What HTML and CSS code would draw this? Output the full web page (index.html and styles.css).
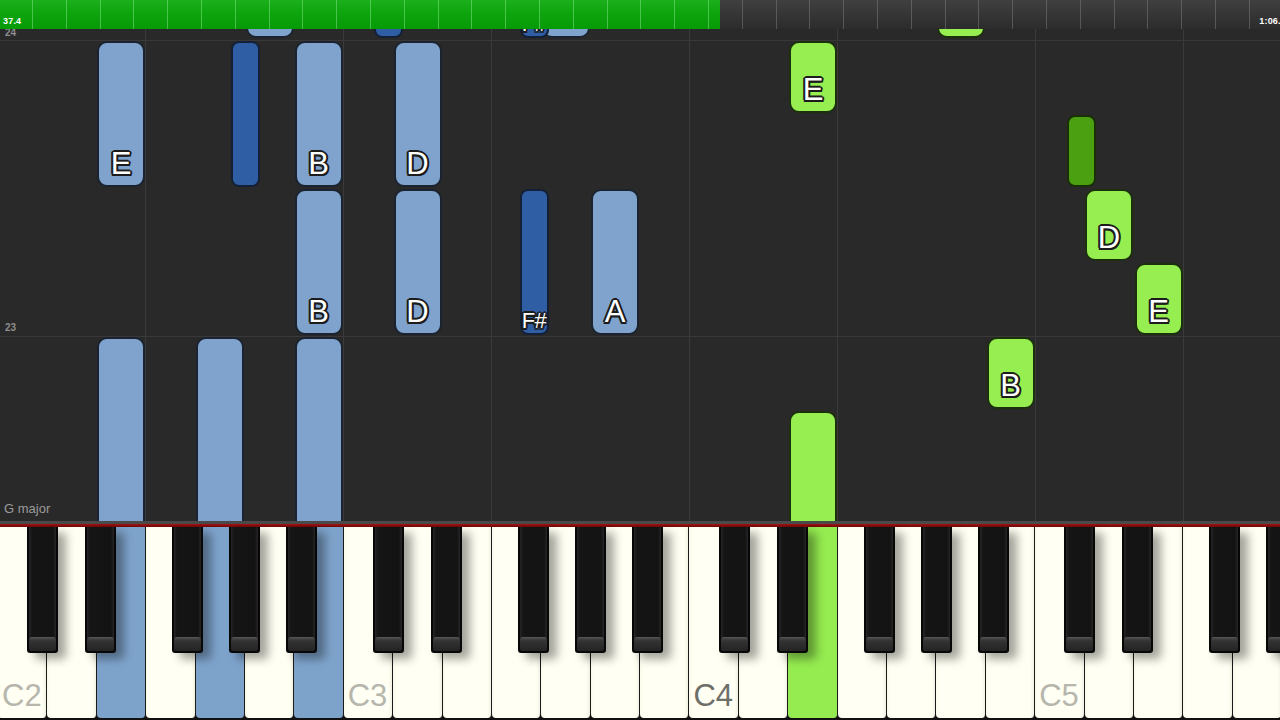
FILE: index.html
```html
<!DOCTYPE html>
<html>
<head>
<meta charset="utf-8">
<title>Piano roll</title>
<link rel="stylesheet" href="styles.css">
</head>
<body>
<div class="app">
  <div class="topbar">
    <div class="progress"><span class="time">37.4</span></div>
    <div class="remain"><span class="time end">1:06.0</span></div>
  </div>

  <div class="roll">
    <div class="vline" style="left:145px"></div>
    <div class="vline" style="left:343px"></div>
    <div class="vline" style="left:491px"></div>
    <div class="vline" style="left:689px"></div>
    <div class="vline" style="left:837px"></div>
    <div class="vline" style="left:1035px"></div>
    <div class="vline" style="left:1183px"></div>
    <div class="hline" style="top:11px"></div>
    <div class="hline" style="top:307px"></div>
    <span class="measure" style="top:-2px">24</span>
    <span class="measure" style="top:293px">23</span>
    <span class="keyname">G major</span>

    <!-- light blue notes -->
    <div class="note lb" style="left:245.5px;top:-70px;width:48px;height:79px"></div>
    <div class="note lb" style="left:97px;top:12px;width:48px;height:146px"><span>E</span></div>
    <div class="note lb" style="left:97px;top:308px;width:48px;height:220px"></div>
    <div class="note lb" style="left:196px;top:308px;width:48px;height:220px"></div>
    <div class="note lb" style="left:294.5px;top:12px;width:48px;height:146px"><span>B</span></div>
    <div class="note lb" style="left:294.5px;top:160px;width:48px;height:146px"><span>B</span></div>
    <div class="note lb" style="left:294.5px;top:308px;width:48px;height:220px"></div>
    <div class="note lb" style="left:393.5px;top:12px;width:48px;height:146px"><span>D</span></div>
    <div class="note lb" style="left:393.5px;top:160px;width:48px;height:146px"><span>D</span></div>
    <div class="note lb" style="left:541.5px;top:-70px;width:48px;height:79px"></div>
    <div class="note lb" style="left:591px;top:160px;width:48px;height:146px"><span>A</span></div>

    <!-- dark blue notes -->
    <div class="note db" style="left:230.5px;top:12px;width:29px;height:146px"></div>
    <div class="note db" style="left:374px;top:-70px;width:29px;height:79px"></div>
    <div class="note db sm" style="left:519.5px;top:-70px;width:29px;height:79px"><span>F#</span></div>
    <div class="note db sm" style="left:519.5px;top:160px;width:29px;height:146px"><span>F#</span></div>

    <!-- green notes -->
    <div class="note lg" style="left:789px;top:12px;width:48px;height:72px"><span>E</span></div>
    <div class="note lg" style="left:789px;top:382px;width:48px;height:150px"></div>
    <div class="note lg" style="left:937px;top:-70px;width:48px;height:79px"></div>
    <div class="note lg" style="left:986.5px;top:308px;width:48px;height:72px"><span>B</span></div>
    <div class="note lg" style="left:1085px;top:160px;width:48px;height:72px"><span>D</span></div>
    <div class="note lg" style="left:1134.5px;top:234px;width:48px;height:72px"><span>E</span></div>
    <div class="note dg" style="left:1066.5px;top:86px;width:29px;height:72px"></div>
  </div>

  <div class="sep-gray"></div>
  <div class="sep-red"></div>

  <div class="keyboard">
    <div class="white"><span class="lbl">C2</span></div>
    <div class="white"></div>
    <div class="white blue"></div>
    <div class="white"></div>
    <div class="white blue"></div>
    <div class="white"></div>
    <div class="white blue"></div>
    <div class="white"><span class="lbl">C3</span></div>
    <div class="white"></div>
    <div class="white"></div>
    <div class="white"></div>
    <div class="white"></div>
    <div class="white"></div>
    <div class="white"></div>
    <div class="white"><span class="lbl dark">C4</span></div>
    <div class="white"></div>
    <div class="white green"></div>
    <div class="white"></div>
    <div class="white"></div>
    <div class="white"></div>
    <div class="white"></div>
    <div class="white"><span class="lbl">C5</span></div>
    <div class="white"></div>
    <div class="white"></div>
    <div class="white"></div>
    <div class="white"></div>

    <div class="black" style="left:29px"></div>
    <div class="black" style="left:87px"></div>
    <div class="black" style="left:174px"></div>
    <div class="black" style="left:231px"></div>
    <div class="black" style="left:288px"></div>
    <div class="black" style="left:374.8px"></div>
    <div class="black" style="left:432.8px"></div>
    <div class="black" style="left:519.8px"></div>
    <div class="black" style="left:576.8px"></div>
    <div class="black" style="left:633.8px"></div>
    <div class="black" style="left:720.6px"></div>
    <div class="black" style="left:778.6px"></div>
    <div class="black" style="left:865.6px"></div>
    <div class="black" style="left:922.6px"></div>
    <div class="black" style="left:979.6px"></div>
    <div class="black" style="left:1066.4px"></div>
    <div class="black" style="left:1124.4px"></div>
    <div class="black" style="left:1211.4px"></div>
    <div class="black" style="left:1268.4px"></div>
  </div>
</div>
</body>
</html>
```
FILE: styles.css
```css
* { box-sizing: border-box; margin: 0; padding: 0; }

html, body {
  width: 1280px;
  height: 720px;
  overflow: hidden;
  background: #111;
  font-family: "Liberation Sans", Arial, sans-serif;
}

.app {
  display: flex;
  flex-direction: column;
  width: 1280px;
  height: 720px;
}

/* ---------- top progress bar ---------- */
.topbar {
  display: flex;
  height: 29px;
  flex: none;
  position: relative;
  z-index: 2;
}

.progress,
.remain {
  display: flex;
  align-items: flex-end;
  padding-bottom: 3px;
}

.progress {
  width: 720px;
  flex: none;
  padding-left: 3px;
  background:
    repeating-linear-gradient(90deg, transparent 0 32px, rgba(150, 235, 150, 0.45) 32px 33px, transparent 33px 33.8px),
    linear-gradient(180deg, #1cb01c 0%, #0da50d 45%, #079a07 100%);
}

.remain {
  flex: 1;
  justify-content: flex-end;
  overflow: hidden;
  background:
    repeating-linear-gradient(90deg, transparent 0 21.8px, rgba(120, 120, 120, 0.55) 21.8px 22.8px, transparent 22.8px 33.8px),
    linear-gradient(180deg, #404040 0%, #373737 40%, #2c2c2c 100%);
}

.time {
  color: #fff;
  font-size: 9px;
  font-weight: bold;
  line-height: 9px;
  letter-spacing: 0.2px;
}

.time.end {
  margin-right: -6px;
}

/* ---------- piano roll ---------- */
.roll {
  position: relative;
  height: 492px;
  flex: none;
  background: #292929;
  overflow: hidden;
}

.vline {
  position: absolute;
  top: 0;
  bottom: 0;
  width: 1px;
  background: #3a3a3a;
}

.hline {
  position: absolute;
  left: 0;
  right: 0;
  height: 1px;
  background: #383838;
}

.measure {
  position: absolute;
  left: 5px;
  font-size: 10px;
  font-weight: bold;
  line-height: 12px;
  color: #8e8e8e;
}

.keyname {
  position: absolute;
  left: 4px;
  bottom: 5px;
  font-size: 13px;
  line-height: 15px;
  color: #9c9c9c;
}

.note {
  position: absolute;
  border: 2px solid #18202b;
  border-radius: 10px;
  display: flex;
  flex-direction: column;
  justify-content: flex-end;
  align-items: center;
  padding-bottom: 5px;
  color: #fff;
  font-size: 31px;
  line-height: 32px;
  text-shadow:
    -1.5px -1.5px 0 #1c1c1c, 1.5px -1.5px 0 #1c1c1c,
    -1.5px 1.5px 0 #1c1c1c, 1.5px 1.5px 0 #1c1c1c,
    0 -2px 0 #1c1c1c, 0 2px 0 #1c1c1c,
    -2px 0 0 #1c1c1c, 2px 0 0 #1c1c1c;
}

.note.lb { background: #7fa3cc; border-color: #1a232f; }
.note.db { background: #2f5ea4; border-color: #142036; border-radius: 8px; }
.note.lg { background: #96ee50; border-color: #1c300e; }
.note.dg { background: #4aa011; border-color: #1a2e07; border-radius: 8px; }

.note.sm {
  font-size: 22px;
  line-height: 22px;
  padding-bottom: 1px;
  letter-spacing: -0.5px;
}

/* ---------- separators ---------- */
.sep-gray {
  height: 3px;
  flex: none;
  background: #4a4a4a;
}

.sep-red {
  height: 3px;
  flex: none;
  background: linear-gradient(180deg, #a51212, #6e0808);
}

/* ---------- keyboard ---------- */
.keyboard {
  position: relative;
  flex: 1;
  display: flex;
  margin-left: -2px;
  background: #111;
}

.white {
  flex: 0 0 49.4px;
  height: 191px;
  background: linear-gradient(90deg, #fbfbec 0, #fffff3 8%, #fffff3 92%, #f3f3e4 100%);
  border-right: 1.6px solid #1a1a1a;
  border-radius: 0 0 4px 4px;
  display: flex;
  align-items: flex-end;
  padding: 0 0 7px 4px;
}

.white.blue {
  background: #7ea3cb;
}

.white.green {
  background: #95ec50;
}

.lbl {
  font-size: 31px;
  line-height: 31px;
  color: #b6b6ad;
}

.lbl.dark {
  color: #6f6f6a;
}

.black {
  position: absolute;
  top: 0;
  width: 31px;
  height: 126px;
  background: #070707;
  border-radius: 0 0 3px 3px;
  box-shadow: 8px 6px 10px rgba(0, 0, 0, 0.36);
}

.black::before {
  content: "";
  position: absolute;
  top: 0;
  left: 2px;
  right: 2px;
  bottom: 15px;
  background:
    linear-gradient(90deg, #262626 0, #151515 3px, #131313 calc(100% - 3px), #262626 100%);
}

.black::after {
  content: "";
  position: absolute;
  left: 2px;
  right: 2px;
  bottom: 2px;
  height: 14px;
  border-radius: 3px 3px 2px 2px;
  background: linear-gradient(180deg, #5b5b5b 0, #454545 1.5px, #333 4px, #242424 100%);
}
```
